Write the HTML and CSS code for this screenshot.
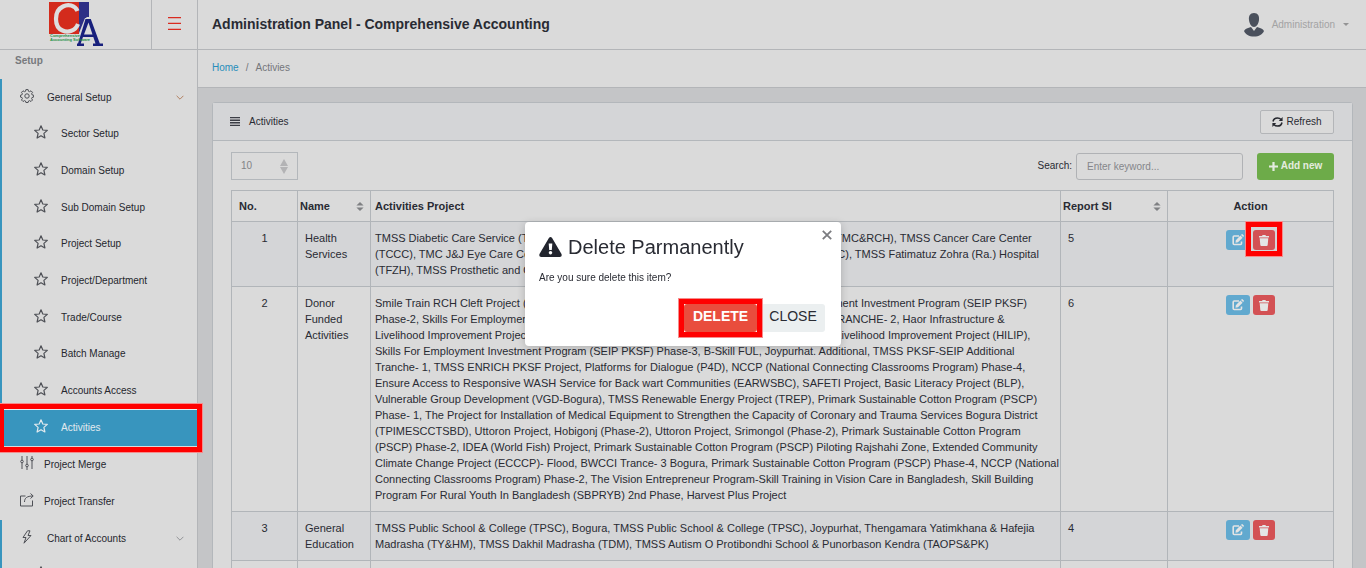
FILE: index.html
```html
<!DOCTYPE html>
<html lang="en">
<head>
<meta charset="utf-8">
<title>Administration Panel - Comprehensive Accounting</title>
<link rel="stylesheet" href="styles.css">
</head>
<body>
<svg class="defs" aria-hidden="true">
  <symbol id="star" viewBox="0 0 14 14"><path d="M7 .8 8.800 5l4.500.4-3.400 3 1 4.600L7 10.700 3.100 13l1-4.600-3.400-3L5.200 5z" fill="none" stroke="currentColor" stroke-width="1.200" stroke-linejoin="round"/></symbol>
  <symbol id="chev" viewBox="0 0 8 5"><path d="M.6.8 4 4.200 7.400.8" fill="none" stroke="currentColor"/></symbol>
  <symbol id="sort" viewBox="0 0 8 10"><path d="M4 0 8 4H0zM0 6h8L4 10z" fill="currentColor"/></symbol>
  <symbol id="pick" viewBox="0 0 8 15"><path d="M4 0 8 7H0zM0 8h8L4 15z" fill="currentColor"/></symbol>
  <symbol id="edit" viewBox="0 0 12 12"><path d="M7 2H2.200Q1.200 2 1.200 3v6.500q0 1 1 1h6.300q1 0 1-1V7.500" fill="none" stroke="currentColor" stroke-width="1.600"/><path d="m3.800 6.200 4.600-4.700 2.200 2.200L6 8.300l-2.500.4zM9 .9l.7-.7q.4-.3.8 0l1.300 1.300q.4.400 0 .8l-.7.800z" fill="currentColor"/></symbol>
  <symbol id="trash" viewBox="0 0 10 11"><path d="M0 1h3l.6-1h2.800L7 1h3v1.500H0zM.7 3.200h8.600L8.700 10q-.1 1-1 1H2.300q-.9 0-1-1z" fill="currentColor"/></symbol>
</svg>

<header class="topbar">
  <a class="brand" href="#" aria-label="Comprehensive Accounting Software">
    <svg width="56" height="48" viewBox="0 0 56 48">
      <path fill="#d32b1c" d="M1 2h30v32H1z"/>
      <path fill="#2d2f86" d="M31 2h10v16l-4 0-6 15z"/>
      <path fill="none" stroke="#dedede" stroke-width="4.200" d="M29.500 11C27 5 20 4 15 6.500 5.500 11 6 27 14.500 30.500 20 33 27.500 31 30 24"/>
      <path fill="none" stroke="#dadada" stroke-width="1.200" d="M28.500 44 39 17.500h4L54 45"/>
      <path fill="#18207c" fill-rule="evenodd" d="M37.500 19h5.300l9 24.500H55V46H45v-2.500h2.500L45.300 37H35l-2.300 6.500H36V46h-7v-2.500h1zm3 3.500L36 34.500h8.500z"/>
      <text class="brand-note" x="2" y="37">Comprehensive</text>
      <text class="brand-note" x="2" y="41">Accounting Software</text>
    </svg>
  </a>
  <button class="burger" aria-label="Toggle menu"><svg width="13" height="13" viewBox="0 0 13 13"><path d="M0 0h13v1.300H0zM0 5.800h13v1.300H0zM0 11.700h13V13H0z" fill="#d92b20"/></svg></button>
  <h1 class="title">Administration Panel - Comprehensive Accounting</h1>
  <button class="user">
    <svg width="20" height="24" viewBox="0 0 20 24"><path fill="#4a505c" d="M10 0c4 0 5.500 3 5 7-.5 4-2.500 7-5 7s-4.500-3-5-7C4.500 3 6 0 10 0zM7 14l3 4 3-4c3 1 6 1.500 7 4-1.500 3.500-5 5.500-10 5.500S1.500 21.500 0 18c1-2.500 4-3 7-4z"/></svg>
    <span>Administration</span><i class="caret"></i>
  </button>
</header>

<div class="shell">
  <nav class="sidebar">
    <h2 class="side-title">Setup</h2>
    <div class="group">
      <a class="item" href="#">
        <svg class="ico" viewBox="0 0 14 14" fill="none" stroke="currentColor"><circle cx="7" cy="7" r="2.200"/><path stroke-linejoin="round" d="M5.900.6h2.200l.4 1.700 1 .4 1.500-.9 1.500 1.500-.9 1.500.4 1 1.600.4v1.900l-1.600.4-.4 1 .9 1.500-1.500 1.500-1.500-.9-1 .4-.4 1.500H5.900l-.4-1.500-1-.4-1.500.9L1.500 11l.9-1.500-.4-1-1.500-.4V6.200L2 5.800l.4-1-.9-1.500L3 1.800l1.500.9 1-.4z"/></svg>
        <span>General Setup</span><svg class="chev warm"><use href="#chev"/></svg>
      </a>
      <div class="submenu">
        <a class="sub" href="#"><svg class="ico"><use href="#star"/></svg>Sector Setup</a>
        <a class="sub" href="#"><svg class="ico"><use href="#star"/></svg>Domain Setup</a>
        <a class="sub" href="#"><svg class="ico"><use href="#star"/></svg>Sub Domain Setup</a>
        <a class="sub" href="#"><svg class="ico"><use href="#star"/></svg>Project Setup</a>
        <a class="sub" href="#"><svg class="ico"><use href="#star"/></svg>Project/Department</a>
        <a class="sub" href="#"><svg class="ico"><use href="#star"/></svg>Trade/Course</a>
        <a class="sub" href="#"><svg class="ico"><use href="#star"/></svg>Batch Manage</a>
        <a class="sub" href="#"><svg class="ico"><use href="#star"/></svg>Accounts Access</a>
        <a class="sub active" href="#"><svg class="ico"><use href="#star"/></svg>Activities<i class="mark mark-side"></i></a>
      </div>
    </div>
    <a class="item plain" href="#">
      <svg class="ico" viewBox="0 0 14 14" fill="none" stroke="currentColor"><path d="M2 0v4M2 7v6M7 0v8M7 11v3M12 0v2M12 5v8"/><circle cx="2" cy="5.500" r="1.300"/><circle cx="7" cy="9.500" r="1.300"/><circle cx="12" cy="3.500" r="1.300"/></svg>
      <span>Project Merge</span>
    </a>
    <a class="item plain" href="#">
      <svg class="ico" viewBox="0 0 14 14" fill="none" stroke="currentColor"><path d="M5.500 3H.5v10h12V7.500M4.500 9c0-4 2.500-6 8.500-6M10.500.5 13.200 3l-2.700 2.500"/></svg>
      <span>Project Transfer</span>
    </a>
    <div class="group">
      <a class="item" href="#">
        <svg class="ico" viewBox="0 0 14 14" fill="none" stroke="currentColor"><path stroke-linejoin="round" d="M7.500.8 3 7.500h3L4 13.200l7-7.700H8L10 .8z"/></svg>
        <span>Chart of Accounts</span><svg class="chev"><use href="#chev"/></svg>
      </a>
      <a class="sub next" href="#" aria-label="Account Group"><svg class="ico"><use href="#star"/></svg></a>
    </div>
  </nav>

  <main class="main">
    <nav class="crumbs" aria-label="Breadcrumb"><a href="#">Home</a><span>/</span><span>Activies</span></nav>
    <section class="card">
      <div class="card-head">
        <svg width="10" height="9" viewBox="0 0 10 9"><path d="M0 .5h10M0 3.200h10M0 5.800h10M0 8.500h10" stroke="#3c3e46" stroke-width="1.400"/></svg>
        <h2>Activities</h2>
        <button class="refresh"><svg width="11" height="10" viewBox="0 0 11 10"><path d="M1 4.500C1.500 2 3.500.9 5.500.9c1.600 0 2.700.6 3.600 1.600M10 5.500C9.500 8 7.500 9.100 5.500 9.100c-1.600 0-2.700-.6-3.600-1.600" fill="none" stroke="#25272e" stroke-width="1.500"/><path d="M10.600 0v4H6.800zM.4 10V6h3.800z" fill="#25272e"/></svg>Refresh</button>
      </div>
      <div class="card-body">
        <div class="tools">
          <div class="pager"><select aria-label="Rows per page"><option>10</option><option>25</option></select><svg class="pick"><use href="#pick"/></svg></div>
          <label for="q">Search:</label>
          <input id="q" type="text" placeholder="Enter keyword...">
          <button class="add"><svg width="9" height="9" viewBox="0 0 9 9"><path d="M4.500 0v9M0 4.500h9" stroke="currentColor" stroke-width="2.200"/></svg>Add new</button>
        </div>
        <table>
          <colgroup><col class="c-no"><col class="c-name"><col class="c-proj"><col class="c-rep"><col class="c-act"></colgroup>
          <thead><tr><th>No.</th><th class="sortable"><div>Name<svg><use href="#sort"/></svg></div></th><th class="text">Activities Project</th><th class="sortable"><div>Report Sl<svg><use href="#sort"/></svg></div></th><th class="mid">Action</th></tr></thead>
          <tbody>
            <tr><td class="mid">1</td><td>Health<br>Services</td>
              <td class="text">TMSS Diabetic Care Service (TDCS), TMSS Medical Colleges and RCH Community Hospital (TMC&amp;RCH), TMSS Cancer Care Center<br>(TCCC), TMC J&amp;J Eye Care Center, TMSS Community Health Services and Care Center (TCHC), TMSS Fatimatuz Zohra (Ra.) Hospital<br>(TFZH), TMSS Prosthetic and Orthotic Center</td>
              <td>5</td><td class="acts"><div><button class="edit" aria-label="Edit"><svg><use href="#edit"/></svg></button><button class="del" aria-label="Delete"><svg><use href="#trash"/></svg><i class="mark mark-row"></i></button></div></td></tr>
            <tr><td class="mid">2</td><td>Donor<br>Funded<br>Activities</td>
              <td class="text">Smile Train RCH Cleft Project (STRCP), Skills For Employment Investment Programs, Employment Investment Program (SEIP PKSF)<br>Phase-2, Skills For Employment Investment Program (SEIP PKSF) Additional Program, SEIP TRANCHE- 2, Haor Infrastructure &amp;<br>Livelihood Improvement Project (HILIP), Haor Infrastructure and Community Project, Phase-2, Livelihood Improvement Project (HILIP),<br>Skills For Employment Investment Program (SEIP PKSF) Phase-3, B-Skill FUL, Joypurhat. Additional, TMSS PKSF-SEIP Additional<br>Tranche- 1, TMSS ENRICH PKSF Project, Platforms for Dialogue (P4D), NCCP (National Connecting Classrooms Program) Phase-4,<br>Ensure Access to Responsive WASH Service for Back wart Communities (EARWSBC), SAFETI Project, Basic Literacy Project (BLP),<br>Vulnerable Group Development (VGD-Bogura), TMSS Renewable Energy Project (TREP), Primark Sustainable Cotton Program (PSCP)<br>Phase- 1, The Project for Installation of Medical Equipment to Strengthen the Capacity of Coronary and Trauma Services Bogura District<br>(TPIMESCCTSBD), Uttoron Project, Hobigonj (Phase-2), Uttoron Project, Srimongol (Phase-2), Primark Sustainable Cotton Program<br>(PSCP) Phase-2, IDEA (World Fish) Project, Primark Sustainable Cotton Program (PSCP) Piloting Rajshahi Zone, Extended Community<br>Climate Change Project (ECCCP)- Flood, BWCCI Trance- 3 Bogura, Primark Sustainable Cotton Program (PSCP) Phase-4, NCCP (National<br>Connecting Classrooms Program) Phase-2, The Vision Entrepreneur Program-Skill Training in Vision Care in Bangladesh, Skill Building<br>Program For Rural Youth In Bangladesh (SBPRYB) 2nd Phase, Harvest Plus Project</td>
              <td>6</td><td class="acts"><div><button class="edit" aria-label="Edit"><svg><use href="#edit"/></svg></button><button class="del" aria-label="Delete"><svg><use href="#trash"/></svg></button></div></td></tr>
            <tr><td class="mid">3</td><td>General<br>Education</td>
              <td class="text">TMSS Public School &amp; College (TPSC), Bogura, TMSS Public School &amp; College (TPSC), Joypurhat, Thengamara Yatimkhana &amp; Hafejia<br>Madrasha (TY&amp;HM), TMSS Dakhil Madrasha (TDM), TMSS Autism O Protibondhi School &amp; Punorbason Kendra (TAOPS&amp;PK)</td>
              <td>4</td><td class="acts"><div><button class="edit" aria-label="Edit"><svg><use href="#edit"/></svg></button><button class="del" aria-label="Delete"><svg><use href="#trash"/></svg></button></div></td></tr>
            <tr><td></td><td></td><td></td><td></td><td></td></tr>
          </tbody>
        </table>
      </div>
    </section>
  </main>
</div>

<div class="backdrop">
  <div class="modal" role="dialog" aria-labelledby="mt">
    <button class="close" aria-label="Close dialog"><svg width="10" height="10" viewBox="0 0 10 10"><path d="m.8.8 8.400 8.400M9.200.8.8 9.200" stroke="#7b7c80" stroke-width="1.800"/></svg></button>
    <h2 id="mt"><svg width="23" height="20" viewBox="0 0 23 20"><path fill="#22252e" fill-rule="evenodd" d="M9.900 1q1.600-2 3.200 0l9.400 16q.9 2.700-1.700 3H2.200Q-.4 19.700.5 17zM9.700 6.500l.5 6.500h2.600l.5-6.500zm1.800 7.500a1.700 1.700 0 1 0 .01 0z"/></svg>Delete Parmanently</h2>
    <p>Are you sure delete this item?</p>
    <div class="modal-foot"><button class="danger">DELETE<i class="mark mark-modal"></i></button><button class="dismiss">CLOSE</button></div>
  </div>
</div>
</body>
</html>
```
FILE: styles.css
```css
* { box-sizing: border-box; }
body { margin: 0; height: 100vh; overflow: hidden; display: flex; flex-direction: column; background: #c4c5c7; color: #292b33; font: 10px/16px "Liberation Sans", Arial, sans-serif; }
h1, h2, p { margin: 0; }
a { color: inherit; text-decoration: none; }
button { font: inherit; color: inherit; padding: 0; border: 0; background: none; }
.defs { display: none; }

.topbar { display: flex; align-items: stretch; flex: none; height: 50px; background: #dadada; border-bottom: 1px solid #b3b5b8; }
.brand { width: 152px; padding-left: 48px; border-right: 1px solid #b3b5b8; }
.brand-note { font: bold 4px "Liberation Sans", Arial, sans-serif; fill: #249246; }
.burger { width: 46px; border-right: 1px solid #b3b5b8; line-height: 0; padding-bottom: 2px; }
.title { flex: 1; padding-left: 14px; font-size: 14px; line-height: 48px; font-weight: bold; }
.user { display: flex; align-items: center; gap: 8px; padding-right: 17px; color: #a3a3a4; }
.caret { border: 3px solid transparent; border-top-color: #939394; border-bottom: 0; }

.shell { display: flex; flex: 1; min-height: 0; }
.sidebar { flex: none; width: 198px; overflow: clip; overflow-clip-margin: 8px; background: #dadada; border-right: 1px solid #b3b5b8; color: #25272e; }
.side-title { height: 29px; padding: 3px 15px; font-size: 10px; color: #77797d; }
.group { border-left: 2px solid #3895be; }
.item { display: flex; align-items: center; height: 37px; padding: 0 13px 0 18px; }
.plain { padding-left: 20px; }
.ico { flex: none; width: 14px; height: 14px; margin-bottom: 4px; color: #4e5056; }
.item span { flex: 1; padding-left: 13px; }
.plain span { padding-left: 10px; }
.chev { width: 8px; height: 5px; color: #929397; }
.warm { color: #b28162; }
.submenu { display: flex; flex-direction: column; height: 330px; }
.sub { flex: 1; display: flex; align-items: center; gap: 13px; padding-left: 32px; }
.next { height: 36px; }
.active { position: relative; margin: 0 -1px 0 -2px; padding-left: 34px; background: #3895be; box-shadow: inset 0 1px #e6eef2; color: #e2eaee; }
.active .ico { color: #e2eaee; }

.mark { position: absolute; z-index: 1; border: 5px solid #f00; outline: 1px solid #f58d8d; pointer-events: none; }
.mark-side { inset: -5px -4px -6px -1px; }
.mark-row { inset: -8px -7px -6px -7px; }
.mark-modal { inset: -5px; }

.main { flex: 1; min-width: 0; }
.crumbs { display: flex; gap: 7px; height: 38px; padding: 10px 14px; background: #dadada; border-bottom: 1px solid #b3b5b8; color: #74767a; }
.crumbs a { color: #278dbb; }
.card { margin: 14px 13px 14px 14px; border: 1px solid #b3b7bb; border-radius: 3px; background: #dadada; }
.card-head { display: flex; align-items: center; height: 38px; padding: 0 18px 0 17px; background: #d4d5d7; border-bottom: 1px solid #b3b7bb; }
.card-head h2 { flex: 1; padding-left: 9px; font-size: 10px; font-weight: normal; }
.refresh { display: flex; align-items: center; justify-content: center; gap: 3px; width: 74px; height: 24px; border: 1px solid #b3b5b8; border-radius: 2px; background: #dadada; }
.card-body { padding: 11px 18px; }
.tools { display: flex; align-items: center; height: 28px; margin-bottom: 10px; }
.pager { position: relative; margin-right: auto; }
.pager select { appearance: none; width: 67px; height: 28px; padding: 0 9px; font: inherit; color: #828386; background: #dadada; border: 1px solid #b3b7bb; border-radius: 0; }
.pick { position: absolute; right: 10px; top: 7px; width: 8px; height: 15px; color: #b3b3b5; }
.tools input { width: 167px; height: 27px; margin: 0 14px 0 4px; padding: 0 10px; font: inherit; background: #dadada; border: 1px solid #b0b2b5; border-radius: 3px; }
.tools input::placeholder { color: #85868a; }
.add { display: flex; align-items: center; justify-content: center; gap: 3px; width: 77px; height: 27px; border-radius: 3px; background: #6dab49; color: #e4ebdf; font-weight: bold; }

table { width: 100%; table-layout: fixed; border-collapse: collapse; font-size: 11px; }
.c-no { width: 66px; }
.c-name { width: 73px; }
.c-proj { width: auto; }
.c-rep { width: 107px; }
.c-act { width: 166px; }
th, td { padding: 8px 7px; border: 1px solid #b1b5b9; text-align: left; vertical-align: top; }
th { padding: 7px; }
th.sortable { padding: 7px 6px 7px 2px; }
th.sortable div { display: flex; align-items: center; justify-content: space-between; }
th svg { width: 8px; height: 9px; color: #7f8083; }
td { height: 49px; }
.text { padding-left: 4px; padding-right: 0; white-space: nowrap; }
th.mid, td.mid { text-align: center; }
tbody tr:nth-child(odd) { background: #d4d5d7; }
.acts div { display: flex; justify-content: center; gap: 3px; }
.acts button { position: relative; display: flex; align-items: center; justify-content: center; width: 22px; height: 20px; border-radius: 3px; color: #e4e4e4; }
.acts .edit { width: 24px; background: #61a9cf; }
.acts .del { background: #d35154; }
.edit svg { width: 12px; height: 12px; }
.del svg { width: 10px; height: 11px; }

.backdrop { position: fixed; inset: 0; z-index: 2; display: flex; justify-content: center; align-items: flex-start; padding-top: 222px; }
.modal { position: relative; width: 316px; padding: 14px 16px 14px 14px; background: #fff; border-radius: 4px; box-shadow: 0 2px 8px #0003; }
.close { position: absolute; top: 8px; right: 9px; line-height: 0; }
.modal h2 { display: flex; align-items: center; gap: 6px; font-size: 20px; line-height: 22px; font-weight: normal; }
.modal p { margin: 12px 0 18px; }
.modal-foot { display: flex; justify-content: flex-end; gap: 4px; }
.modal-foot button { position: relative; height: 28px; border-radius: 3px; font-size: 14px; line-height: 24px; padding-bottom: 4px; }
.modal-foot .danger { z-index: 1; width: 73px; background: #e94d3d; color: #fff; font-weight: bold; }
.modal-foot .dismiss { width: 64px; background: #ebeff0; }
```
